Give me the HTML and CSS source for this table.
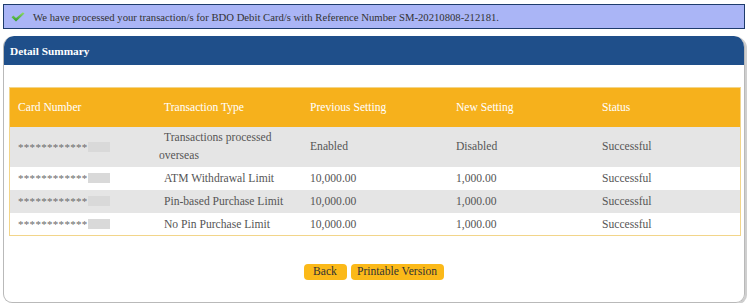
FILE: index.html
```html
<!DOCTYPE html>
<html>
<head>
<meta charset="utf-8">
<link rel="stylesheet" href="styles.css">
</head>
<body>
<div class="page">
  <div class="msg">
    <svg class="check" width="14" height="10" viewBox="0 0 14 10">
      <defs>
        <linearGradient id="g" x1="0" y1="0" x2="0" y2="1">
          <stop offset="0" stop-color="#8fdc6a"/>
          <stop offset="1" stop-color="#2f9a2a"/>
        </linearGradient>
      </defs>
      <path d="M0.5 5.2 L2.4 3.6 L5 6 L11.8 0.3 L13.5 1.6 L5 9.5 Z" fill="url(#g)"/>
    </svg>
    <span>We have processed your transaction/s for BDO Debit Card/s with Reference Number SM-20210808-212181.</span>
  </div>
  <div class="panel">
    <div class="panel-head">Detail Summary</div>
    <div class="panel-body">
      <table class="grid">
        <thead>
          <tr>
            <th>Card Number</th>
            <th>Transaction Type</th>
            <th>Previous Setting</th>
            <th>New Setting</th>
            <th>Status</th>
          </tr>
        </thead>
        <tbody>
          <tr class="odd tall">
            <td><span class="mask">************</span><span class="blur"></span></td>
            <td class="type">Transactions processed overseas</td>
            <td>Enabled</td>
            <td>Disabled</td>
            <td>Successful</td>
          </tr>
          <tr>
            <td><span class="mask">************</span><span class="blur"></span></td>
            <td class="type">ATM Withdrawal Limit</td>
            <td>10,000.00</td>
            <td>1,000.00</td>
            <td>Successful</td>
          </tr>
          <tr class="odd">
            <td><span class="mask">************</span><span class="blur"></span></td>
            <td class="type">Pin-based Purchase Limit</td>
            <td>10,000.00</td>
            <td>1,000.00</td>
            <td>Successful</td>
          </tr>
          <tr class="last">
            <td><span class="mask">************</span><span class="blur"></span></td>
            <td class="type">No Pin Purchase Limit</td>
            <td>10,000.00</td>
            <td>1,000.00</td>
            <td>Successful</td>
          </tr>
        </tbody>
      </table>
      <div class="actions">
        <button class="btn btn-back">Back</button>
        <button class="btn btn-print">Printable Version</button>
      </div>
    </div>
  </div>
</div>
</body>
</html>
```

FILE: styles.css
```css
html, body {
  margin: 0;
  padding: 0;
  background: #ffffff;
}
body {
  font-family: "Liberation Serif", "Times New Roman", serif;
  font-size: 11.6px;
  color: #444;
}
.page {
  padding: 4px 5px 0 3px;
}
.msg {
  height: 23px;
  border: 1px solid #1e3c6c;
  background: #aab5f6;
  display: flex;
  align-items: center;
  padding-left: 7px;
  color: #333;
  font-size: 10.7px;
}
.check {
  margin-right: 8px;
  margin-top: 1px;
}
.panel {
  margin-top: 7px;
  border: 1px solid #b9b9b9;
  border-top: none;
  border-radius: 11px 11px 9px 9px;
  box-shadow: 2px 1px 0 #cfcfcf;
  height: 266px;
  overflow: hidden;
}
.panel-head {
  background: #1f4f8a;
  height: 29px;
  display: flex;
  align-items: center;
  padding-left: 7px;
  color: #fff;
  font-weight: bold;
  font-size: 11.3px;
  border-radius: 11px 11px 0 0;
  margin: 0 -1px;
}
.panel-body {
  padding: 22px 4px 0 5px;
}
.grid {
  width: 731px;
  border-collapse: collapse;
  border: 1px solid #f2d58a;
  table-layout: fixed;
}
.grid th, .grid td {
  width: 138px;
  padding: 0 0 0 8px;
  text-align: left;
  vertical-align: middle;
}
.grid th {
  background: #f6b11c;
  color: #fff;
  font-weight: normal;
  height: 39px;
}
.grid td {
  height: 23px;
  color: #555;
}
.grid tr.tall td {
  height: 40px;
  line-height: 18px;
}
.grid tr.last td {
  height: 22px;
}
.grid tr.odd td {
  background: #e5e5e5;
}
.grid td.type {
  padding-left: 3px;
  text-indent: 5px;
}
.mask {
  font-size: 11px;
  letter-spacing: 0.3px;
  color: #6a6a6a;
}
.blur {
  display: inline-block;
  width: 22px;
  height: 10px;
  background: #d9d9d9;
  vertical-align: -1px;
}
.actions {
  display: flex;
  justify-content: center;
  gap: 4px;
  margin-top: 28px;
  padding-right: 2px;
}
.btn {
  font-family: "Liberation Serif", "Times New Roman", serif;
  font-size: 11.6px;
  color: #333;
  background: #fbb919;
  border: none;
  border-radius: 4px;
  height: 16px;
  line-height: 16px;
  padding: 0;
}
.btn-back {
  width: 43px;
}
.btn-print {
  width: 93px;
}
```
